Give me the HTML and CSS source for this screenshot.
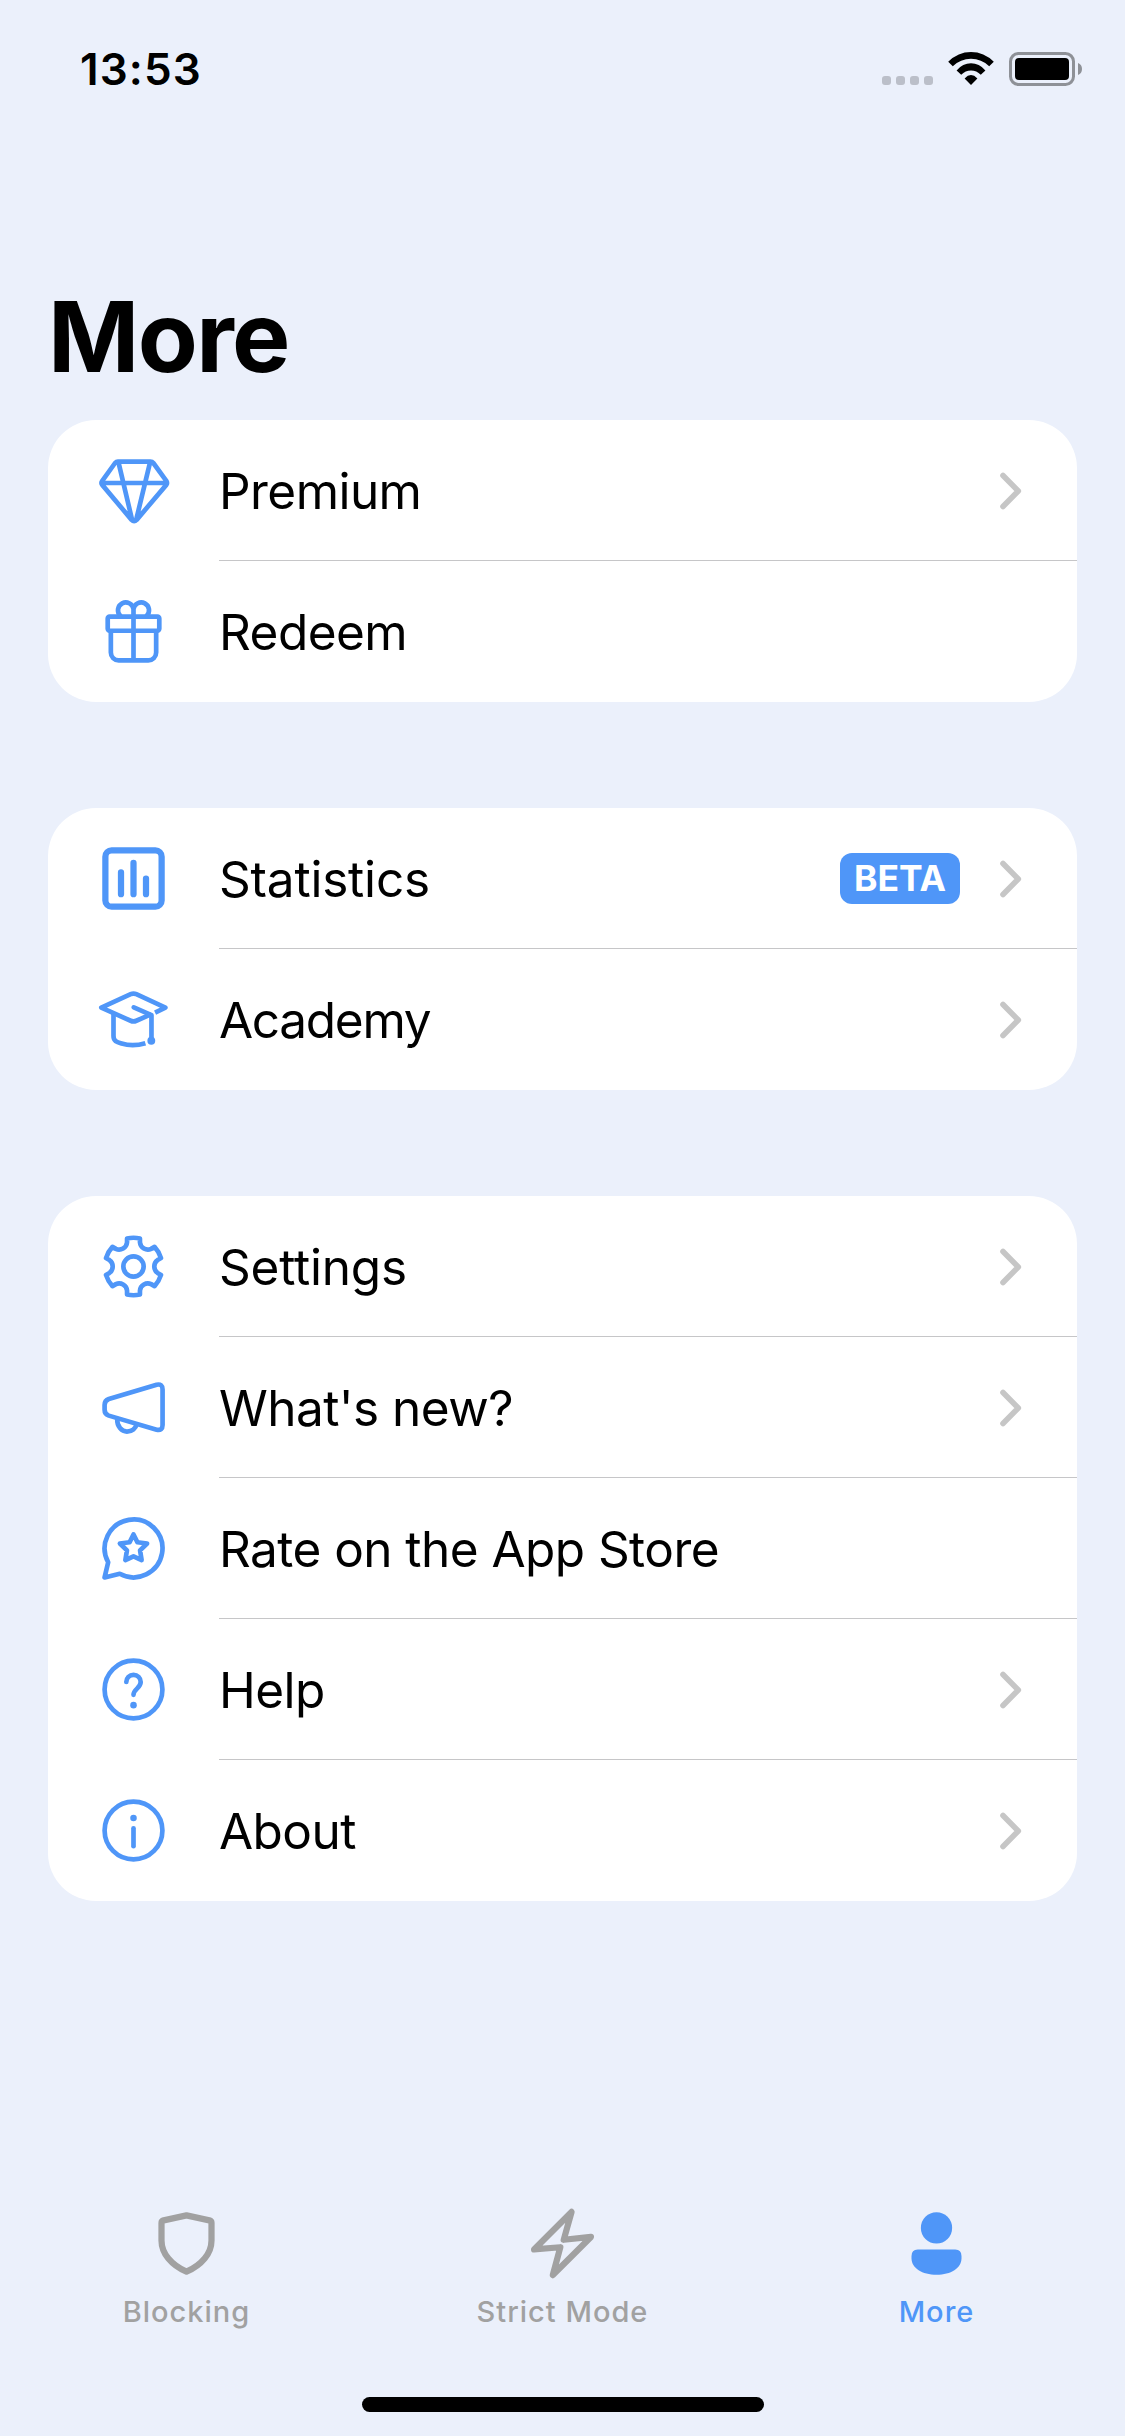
FILE: index.html
```html
<!DOCTYPE html>
<html lang="en">
<head>
    <meta charset="UTF-8">
    <meta name="viewport" content="width=device-width, initial-scale=1.0">
    <title>More</title>
    <link rel="stylesheet" href="styles.css">
</head>
<body>

<header class="status-bar">
    <span class="time">13:53</span>
    <svg class="status-icons" viewBox="0 0 202 36">
        <g fill="#bbbfc9">
            <rect x="1" y="25" width="9" height="9" rx="3"/>
            <rect x="15" y="25" width="9" height="9" rx="3"/>
            <rect x="29" y="25" width="9" height="9" rx="3"/>
            <rect x="43" y="25" width="9" height="9" rx="3"/>
        </g>
        <path d="M67.2 10.8Q77 1 90 1T112.8 10.8L108.2 15.2Q100.5 7.7 90 7.7T71.8 15.2Z"/>
        <path d="M75.6 19.4Q81.8 12.3 90 12.3T104.4 19.4L99.8 23.8Q95.6 19.4 90 19.4T80.2 23.8Z"/>
        <path d="M83.6 27.4Q90 20.8 96.4 27.4L90 34Z"/>
        <rect x="129.5" y="2.5" width="63" height="31" rx="8" fill="none" stroke="#8e9197" stroke-width="3"/>
        <rect x="134" y="7" width="54" height="22" rx="4"/>
        <path d="M197 12Q201 13.5 201 18T197 24Z" fill="#8e9197"/>
    </svg>
</header>

<h1>More</h1>

<main>
    <ul class="card">
        <li class="row">
            <svg class="icon" viewBox="0 0 24 24">
                <path d="M7 2.75H17.4Q18 2.75 18.35 3.2L22.5 8.9Q22.95 9.6 22.5 10.2L13 21.4Q12.2 22.2 11.4 21.4L2 10.2Q1.5 9.6 2 8.9L6.1 3.2Q6.5 2.75 7 2.75ZM2 9.6H22.4M7.2 3L11.5 21.2M17.3 3L12.9 21.2"/>
            </svg>
            <div class="content">
                <span class="label">Premium</span>
                <svg class="chevron" viewBox="0 0 22 38"><path d="M3 3.5L18.3 19L3 34.5"/></svg>
            </div>
        </li>
        <li class="row">
            <svg class="icon" viewBox="0 0 24 24">
                <rect x="3.75" y="7.25" width="16.5" height="4.5" rx=".6"/>
                <path d="M4.75 12V18.75A2.5 2.5 0 0 0 7.25 21.25H16.75A2.5 2.5 0 0 0 19.25 18.75V12M12 4.8V21.2M7.8 7A2.5 2.5 0 1 1 12 4.8A2.5 2.5 0 1 1 16.2 7"/>
            </svg>
            <div class="content">
                <span class="label">Redeem</span>
            </div>
        </li>
    </ul>

    <ul class="card">
        <li class="row">
            <svg class="icon bold" viewBox="0 0 24 24">
                <rect x="3" y="3" width="18" height="18" rx="2"/>
                <path d="M8 10V17M12 7V17M16 12V17"/>
            </svg>
            <div class="content">
                <span class="label loose">Statistics</span>
                <span class="badge">BETA</span>
                <svg class="chevron" viewBox="0 0 22 38"><path d="M3 3.5L18.3 19L3 34.5"/></svg>
            </div>
        </li>
        <li class="row">
            <svg class="icon" viewBox="0 0 24 24">
                <path stroke-linecap="butt" d="M18.9 9.8L22.2 8.2L12.9 3.9Q12 3.5 11.1 3.9L1.7 8.2L11.1 12.4Q12 12.8 12.9 12.4L17.7 10.3"/>
                <path d="M12.1 8.1L17.75 10.6V18.6"/>
                <path stroke-linecap="butt" d="M5.6 10.2V17.3C5.6 18.9 6.6 19.2 8.2 19.7Q11.8 20.8 15.8 19.6"/>
                <circle class="fill" cx="17.7" cy="18.8" r="1.25"/>
            </svg>
            <div class="content">
                <span class="label tight">Academy</span>
                <svg class="chevron" viewBox="0 0 22 38"><path d="M3 3.5L18.3 19L3 34.5"/></svg>
            </div>
        </li>
    </ul>

    <ul class="card">
        <li class="row">
            <svg class="icon" viewBox="-12 -12 24 24">
                <circle r="3.25"/>
                <path d="M8.8 -2.7L7.7 -2.05C6.3 -1.1 6.3 1.1 7.7 2.05L8.8 2.7A9.2 9.2 0 0 1 6.74 6.27L5.63 5.64C4.1 4.91 2.2 6.01 2.07 7.7L2.06 8.97A9.2 9.2 0 0 1 -2.06 8.97L-2.07 7.7C-2.2 6.01 -4.1 4.91 -5.63 5.64L-6.74 6.27A9.2 9.2 0 0 1 -8.8 2.7L-7.7 2.05C-6.3 1.1 -6.3 -1.1 -7.7 -2.05L-8.8 -2.7A9.2 9.2 0 0 1 -6.74 -6.27L-5.63 -5.64C-4.1 -4.91 -2.2 -6.01 -2.07 -7.7L-2.06 -8.97A9.2 9.2 0 0 1 2.06 -8.97L2.07 -7.7C2.2 -6.01 4.1 -4.91 5.63 -5.64L6.74 -6.27A9.2 9.2 0 0 1 8.8 -2.7Z"/>
            </svg>
            <div class="content">
                <span class="label loose">Settings</span>
                <svg class="chevron" viewBox="0 0 22 38"><path d="M3 3.5L18.3 19L3 34.5"/></svg>
            </div>
        </li>
        <li class="row">
            <svg class="icon" viewBox="0 0 24 24">
                <path d="M4.1 9.3L19.4 4.7Q21.3 4.3 21.3 6.2V17.6Q21.3 19.5 19.4 19.1L4.1 14.6Q2.75 14.1 2.75 12.7V11.2Q2.75 9.8 4.1 9.3Z"/>
                <path d="M6.8 15.8C6.7 18 8.2 19.7 9.9 19.7S12.7 18.6 13 17.4"/>
            </svg>
            <div class="content">
                <span class="label">What's new?</span>
                <svg class="chevron" viewBox="0 0 22 38"><path d="M3 3.5L18.3 19L3 34.5"/></svg>
            </div>
        </li>
        <li class="row">
            <svg class="icon" viewBox="0 0 24 24">
                <path d="M7.6 20.1A9.25 9.25 0 1 0 3.9 16.4L2.75 21.25Z"/>
                <path d="M12 7.5L13.25 10L16.35 10.4L14.1 12.6L14.6 15.7L12 14.5L9.4 15.7L9.9 12.6L7.65 10.4L10.75 10Z"/>
            </svg>
            <div class="content">
                <span class="label">Rate on the App Store</span>
            </div>
        </li>
        <li class="row">
            <svg class="icon" viewBox="0 0 24 24">
                <circle cx="12" cy="12" r="9.25"/>
                <path d="M9.7 9.6A2.3 2.3 0 1 1 14.3 9.6C14.3 11.6 12 11.8 12 13.7"/>
                <circle class="fill" cx="12" cy="17" r="1.05"/>
            </svg>
            <div class="content">
                <span class="label">Help</span>
                <svg class="chevron" viewBox="0 0 22 38"><path d="M3 3.5L18.3 19L3 34.5"/></svg>
            </div>
        </li>
        <li class="row">
            <svg class="icon" viewBox="0 0 24 24">
                <circle cx="12" cy="12" r="9.25"/>
                <path d="M12 11.3V17"/>
                <circle class="fill" cx="12" cy="8" r="1.05"/>
            </svg>
            <div class="content">
                <span class="label">About</span>
                <svg class="chevron" viewBox="0 0 22 38"><path d="M3 3.5L18.3 19L3 34.5"/></svg>
            </div>
        </li>
    </ul>
</main>

<footer>
    <nav class="tab-bar">
        <a class="tab">
            <svg class="icon bold" viewBox="0 0 24 24">
                <path d="M12 3L19.3 4.6Q20 4.8 20 5.4V11C20 15.2 16.8 18.9 12 21C7.2 18.9 4 15.2 4 11V5.4Q4 4.8 4.7 4.6Z"/>
            </svg>
            <span>Blocking</span>
        </a>
        <a class="tab">
            <svg class="icon bold" viewBox="0 0 24 24">
                <path d="M14.9 1.9L12.4 10.8L21.1 9.9L8.9 22.1L11.3 13.2L2.9 13.9Z"/>
            </svg>
            <span>Strict Mode</span>
        </a>
        <a class="tab active">
            <svg class="icon" viewBox="0 0 24 24">
                <circle class="fill" cx="12" cy="7" r="5"/>
                <path class="fill" d="M6 13.9H18Q20 13.9 20 16V16.7C20 19.8 16.6 22 12 22S4 19.8 4 16.7V16Q4 13.9 6 13.9Z"/>
            </svg>
            <span>More</span>
        </a>
    </nav>
    <div class="home-indicator"></div>
</footer>

</body>
</html>
```
FILE: styles.css
```css
* {
    box-sizing: border-box;
}

body {
    display: flex;
    flex-direction: column;
    height: 2436px;
    margin: 0;
    background-color: #ebf0fb;
    color: #000;
    font-family: Inter, "Liberation Sans", sans-serif;
}

.status-bar {
    display: flex;
    align-items: center;
    justify-content: space-between;
    height: 138px;
    padding: 0 42px 0 80px;
}

.time {
    font-size: 44px;
    font-weight: 600;
    letter-spacing: 1.1px;
}

.status-icons {
    width: 202px;
    height: 36px;
}

h1 {
    margin: 139px 0 23px 48px;
    font-size: 98px;
    font-weight: 700;
    line-height: 120px;
    letter-spacing: -1.6px;
}

main {
    display: flex;
    flex-direction: column;
    gap: 106px;
    padding: 0 48px;
}

.card {
    margin: 0;
    padding: 0;
    border-radius: 48px;
    background-color: #fff;
    list-style: none;
}

.row {
    display: flex;
    align-items: center;
    gap: 48px;
    height: 141px;
    padding-left: 48px;
}

.icon {
    flex: none;
    width: 75px;
    height: 75px;
    color: #4f96f8;
    fill: none;
    stroke: currentColor;
    stroke-width: 1.5;
    stroke-linecap: round;
    stroke-linejoin: round;
}

.icon.bold {
    stroke-width: 2;
}

.icon .fill {
    fill: currentColor;
    stroke: none;
}

.content {
    display: flex;
    flex: 1;
    align-items: center;
    height: 141px;
    padding: 2px 55px 0 0;
    border-bottom: 1px solid #c6c6c8;
}

.row:last-child .content {
    padding-top: 1px;
    border-bottom: none;
}

.label {
    flex: 1;
    font-size: 49.5px;
    letter-spacing: -0.55px;
}

.label.loose {
    letter-spacing: -0.2px;
}

.label.tight {
    letter-spacing: -1.3px;
}

.badge {
    width: 120px;
    margin: 0 40px 2px 0;
    border-radius: 12px;
    background-color: #4f96f8;
    color: #fff;
    font-size: 35.5px;
    font-weight: 700;
    line-height: 51px;
    text-align: center;
}

.chevron {
    width: 22px;
    height: 38px;
    fill: none;
    stroke: #c6c6c6;
    stroke-width: 5.6;
    stroke-linecap: round;
    stroke-linejoin: round;
}

footer {
    margin-top: auto;
    padding-bottom: 24px;
}

.tab-bar {
    display: grid;
    grid-template-columns: 373px 379px 369px;
    margin-bottom: 67px;
}

.tab {
    display: flex;
    flex-direction: column;
    align-items: center;
    gap: 13px;
    color: #a1a1a1;
    font-size: 29px;
    font-weight: 500;
    line-height: 36px;
    letter-spacing: 1px;
}

.tab .icon {
    color: inherit;
}

.tab.active {
    color: #4f96f8;
}

.home-indicator {
    width: 402px;
    height: 15px;
    margin: 0 auto;
    border-radius: 8px;
    background-color: #000;
}
```
